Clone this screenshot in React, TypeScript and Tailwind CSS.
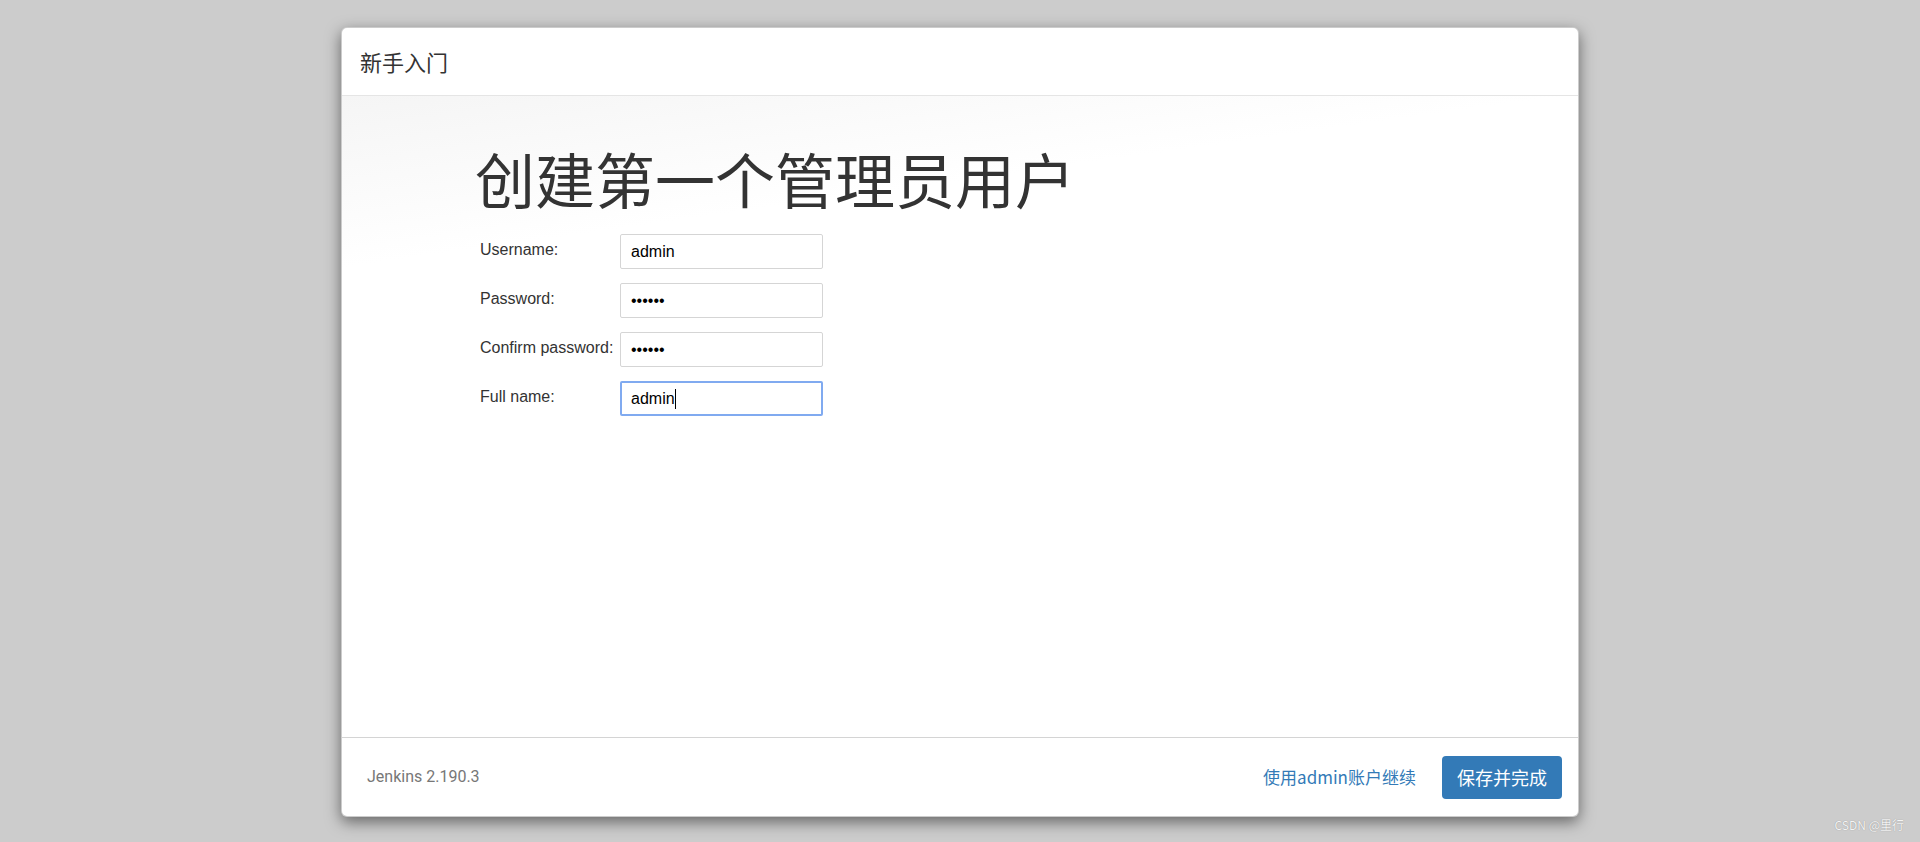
const fields = [
  { label: 'Username:', value: 'admin', type: 'text' },
  { label: 'Password:', value: 'secret', type: 'password' },
  { label: 'Confirm password:', value: 'secret', type: 'password' },
];

export default function App() {
  return (
    <div className="relative flex h-[842px] w-full justify-center bg-[#cccccc] pt-[27px] font-['Liberation_Sans','Noto_Sans_CJK_SC',sans-serif]">
      <section className="flex h-[790px] w-[1238px] flex-col overflow-hidden rounded-md border border-black/20 bg-white shadow-[0_5px_15px_rgba(0,0,0,0.5)]">
        <header className="flex h-[68px] shrink-0 items-center border-b border-[#e5e5e5] px-[18px]">
          <h4 className="font-['Noto_Sans_CJK_SC',sans-serif] text-[22px] text-[#333]">新手入门</h4>
        </header>

        <div className="flex-1 bg-[linear-gradient(172deg,#f5f5f5,#ffffff_170px)] pl-[133px] pt-[49px]">
          <h1 className="font-['Noto_Sans_CJK_SC',sans-serif] text-[60px] leading-[66px] font-normal text-[#333]">
            创建第一个管理员用户
          </h1>
          <div className="mt-[23px] flex flex-col gap-[14px] pl-[5px]">
            {fields.map((field) => (
              <div key={field.label} className="flex">
                <label className="w-[140px] shrink-0 pt-[6px] text-[16px] leading-5 text-[#333]">{field.label}</label>
                <input
                  readOnly
                  type={field.type}
                  defaultValue={field.value}
                  className="h-[35px] w-[203px] rounded-[2px] border border-[#d5d5d5] bg-white pl-[10px] text-[16px] text-black outline-none"
                />
              </div>
            ))}
            <div className="flex">
              <label className="w-[140px] shrink-0 pt-[6px] text-[16px] leading-5 text-[#333]">Full name:</label>
              <div className="flex h-[35px] w-[203px] items-center rounded-[2px] border-2 border-[#80aaf0] bg-white pl-[9px] text-[16px] text-black">
                admin
                <span className="h-[20px] w-px bg-black" />
              </div>
            </div>
          </div>
        </div>

        <footer className="flex h-[79px] shrink-0 items-center justify-between border-t border-[#d4d4d4] pl-[25px] pr-[16px]">
          <span className="font-['Roboto',sans-serif] text-[16px] text-[#777]">Jenkins 2.190.3</span>
          <div className="flex items-center gap-[26px] font-['Noto_Sans_CJK_SC',sans-serif]">
            <a className="text-[17px] text-[#337ab7]">使用admin账户继续</a>
            <button className="h-[43px] w-[120px] rounded-[4px] bg-[#337ab7] text-[18px] text-white">保存并完成</button>
          </div>
        </footer>
      </section>

      <span className="absolute bottom-[8px] right-[16px] font-['Noto_Sans_CJK_SC',sans-serif] text-[12px] text-[#f4f4f4] [text-shadow:0_0_1px_rgba(0,0,0,0.35)]">
        CSDN @里行
      </span>
    </div>
  );
}
